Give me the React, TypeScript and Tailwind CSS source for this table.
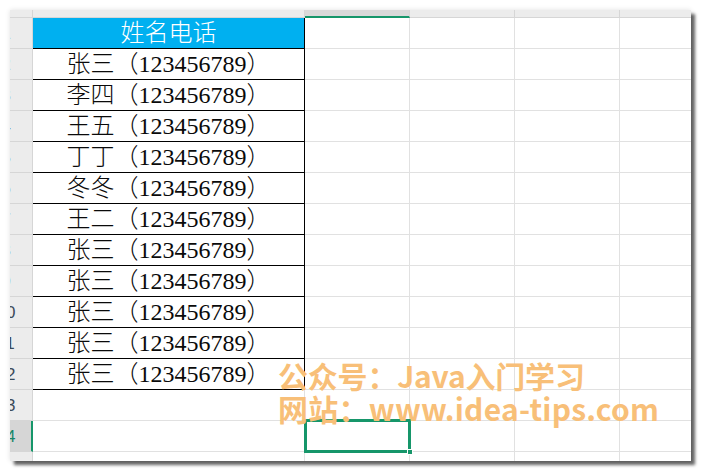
import React from "react";

const names = ["张三", "李四", "王五", "丁丁", "冬冬", "王二", "张三", "张三", "张三", "张三", "张三"];

const rowHeadFont = { fontFamily: '"Liberation Sans", Arial, sans-serif' };
const cellFont = { fontFamily: '"Liberation Serif", "Noto Sans CJK SC", serif' };

const RowHead = ({ n, selected }: { n: number; selected?: boolean }) => (
  <div
    className={
      "w-[23px] h-full overflow-hidden border-b border-[#d6d6d6] flex items-center " +
      (selected ? "bg-[#d6d6d6] border-r-2 border-r-[#16966a]" : "bg-[#ececec] border-r border-r-[#d6d6d6]")
    }
  >
    <div
      className={
        "shrink-0 w-[50px] ml-[-29px] text-center text-[17px] leading-none " +
        (selected ? "text-[#16866a]" : "text-[#3c4a5a]")
      }
      style={rowHeadFont}
    >
      {n}
    </div>
  </div>
);

// columns B..E, plain grid
const GridCells = () => (
  <>
    <div className="w-[105px] h-full border-r border-b border-[#e1e1e1]" />
    <div className="w-[105px] h-full border-r border-b border-[#e1e1e1]" />
    <div className="w-[105px] h-full border-r border-b border-[#e1e1e1]" />
    <div className="flex-1 h-full border-b border-[#e1e1e1]" />
  </>
);

export default function App() {
  const rows: React.ReactNode[] = [];

  rows.push(
    <div key="r1" className="flex h-[31px]">
      <RowHead n={1} />
      <div
        className="w-[272px] h-full bg-[#00b0f0] border-r border-b border-black flex items-center justify-center text-white text-[24px] font-light"
        style={cellFont}
      >
        姓名电话
      </div>
      <GridCells />
    </div>
  );

  names.forEach((name, i) => {
    rows.push(
      <div key={"r" + (i + 2)} className="flex h-[31px]">
        <RowHead n={i + 2} />
        <div
          className="w-[272px] h-full bg-white border-r border-b border-black flex items-center justify-center text-[#0a0a0a] text-[24px] font-light"
          style={cellFont}
        >
          {name}（123456789）
        </div>
        <GridCells />
      </div>
    );
  });

  rows.push(
    <div key="r13" className="flex h-[31px]">
      <RowHead n={13} />
      <div className="w-[272px] h-full border-r border-b border-[#e1e1e1]" />
      <GridCells />
    </div>
  );

  rows.push(
    <div key="r14" className="flex h-[31px]">
      <RowHead n={14} selected />
      <div className="w-[272px] h-full border-r border-b border-[#e1e1e1]" />
      <div className="relative w-[105px] h-full border-r border-b border-[#e1e1e1]">
        <div className="absolute left-[-1px] top-[-2px] w-[107px] h-[34px] border-[3px] border-[#16966a]" />
        <div className="absolute right-[-4px] bottom-[-4px] w-[6px] h-[6px] bg-[#16966a] border border-white" />
      </div>
      <div className="w-[105px] h-full border-r border-b border-[#e1e1e1]" />
      <div className="w-[105px] h-full border-r border-b border-[#e1e1e1]" />
      <div className="flex-1 h-full border-b border-[#e1e1e1]" />
    </div>
  );

  rows.push(
    <div key="r15" className="flex h-[9px] overflow-hidden">
      <div className="w-[23px] h-full bg-[#ececec] border-r border-[#d6d6d6] overflow-hidden">
        <div
          className="w-[50px] ml-[-29px] text-center text-[17px] leading-none text-[#3c4a5a] mt-[8px]"
          style={rowHeadFont}
        >
          15
        </div>
      </div>
      <div className="w-[272px] h-full border-r border-[#e1e1e1]" />
      <div className="w-[105px] h-full border-r border-[#e1e1e1]" />
      <div className="w-[105px] h-full border-r border-[#e1e1e1]" />
      <div className="w-[105px] h-full border-r border-[#e1e1e1]" />
      <div className="flex-1 h-full" />
    </div>
  );

  return (
    <div className="relative w-[702px] h-[472px] bg-white overflow-hidden pt-[10px] pl-[10px]">
      <div className="w-[681px] h-[451px] bg-white flex flex-col overflow-hidden shadow-[4px_4px_3px_rgba(0,0,0,0.6),0_0_5px_rgba(0,0,0,0.12)]">
        {/* column header strip */}
        <div className="flex h-[8px] shrink-0">
          <div className="w-[23px] h-full bg-[#ececec] border-r border-b border-[#d6d6d6]" />
          <div className="w-[272px] h-full bg-[#ececec] border-r border-b border-[#d6d6d6]" />
          <div className="w-[105px] h-full bg-[#d9d9d9] border-r border-[#d6d6d6] border-b-2 border-b-[#16966a]" />
          <div className="w-[105px] h-full bg-[#ececec] border-r border-b border-[#d6d6d6]" />
          <div className="w-[105px] h-full bg-[#ececec] border-r border-b border-[#d6d6d6]" />
          <div className="flex-1 h-full bg-[#ececec] border-b border-[#d6d6d6]" />
        </div>
        {rows}
      </div>

      {/* watermark */}
      <div
        className="absolute left-[278px] top-[359px] text-[30px] leading-[33px] font-bold text-[#f8bf78] whitespace-nowrap"
        style={{ fontFamily: '"Noto Sans CJK SC", "Open Sans", sans-serif' }}
      >
        <div className="tracking-[-0.2px]">公众号：Java入门学习</div>
        <div className="tracking-[0.25px]">网站：www.idea-tips.com</div>
      </div>
    </div>
  );
}
